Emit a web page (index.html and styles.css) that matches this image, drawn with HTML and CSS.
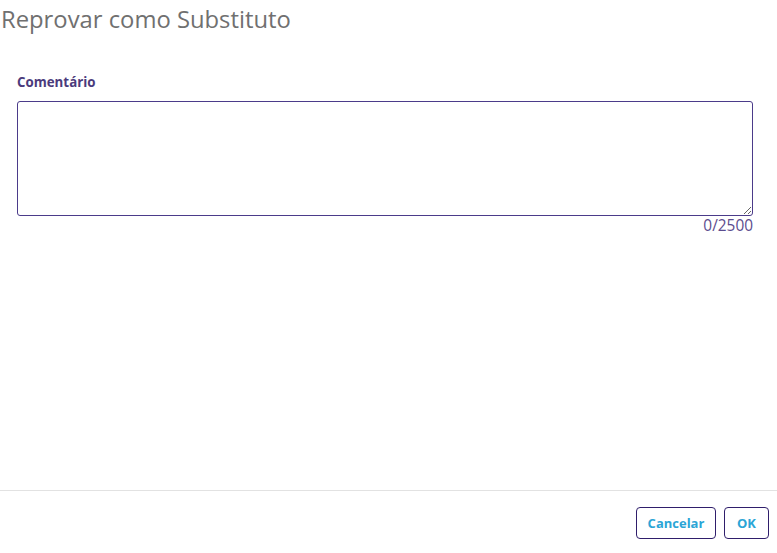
FILE: index.html
```html
<!DOCTYPE html>
<html lang="pt">
<head>
<meta charset="utf-8">
<link rel="stylesheet" href="styles.css">
</head>
<body>
<div class="dialog">
  <h1 class="title">Reprovar como Substituto</h1>
  <div class="content">
    <label class="label" for="c">Comentário</label>
    <textarea id="c" class="field"></textarea>
    <div class="counter">0/2500</div>
  </div>
  <div class="footer">
    <button class="btn btn-cancel">Cancelar</button>
    <button class="btn btn-ok">OK</button>
  </div>
</div>
</body>
</html>
```
FILE: styles.css
```css
html, body {
  margin: 0;
  padding: 0;
  background: #fff;
}
body {
  font-family: "Open Sans", "Noto Sans", sans-serif;
  width: 777px;
  height: 553px;
  overflow: hidden;
}
.dialog {
  display: flex;
  flex-direction: column;
  height: 553px;
}
.title {
  margin: 0;
  padding: 2px 0 0 1px;
  font-size: 23.8px;
  font-weight: 400;
  line-height: 34px;
  color: #707070;
}
.content {
  flex: 1;
  display: flex;
  flex-direction: column;
  padding: 37px 24px 0 17px;
}
.label {
  font-size: 13.3px;
  font-weight: 700;
  color: #4b3b7c;
  line-height: 18px;
}
.field {
  margin-top: 10px;
  height: 115px;
  box-sizing: border-box;
  border: 1px solid #4b3b8a;
  border-radius: 3px;
  resize: vertical;
  font-family: inherit;
  font-size: 13px;
  outline: none;
  padding: 6px 8px;
}
.counter {
  align-self: flex-end;
  font-size: 15.4px;
  color: #5b4c8e;
  line-height: 20px;
}
.footer {
  border-top: 1px solid #e2e2e2;
  display: flex;
  justify-content: flex-end;
  gap: 8px;
  padding: 16px 8px 14px 0;
  height: 63px;
  box-sizing: border-box;
}
.btn {
  height: 32px;
  box-sizing: border-box;
  border: 1px solid #2f1e6b;
  border-radius: 4px;
  background: #fff;
  color: #2ba5d6;
  font-family: inherit;
  font-size: 13px;
  font-weight: 700;
  padding: 0 10px;
}
.btn-cancel { width: 80px; }
.btn-ok { width: 45px; }
```
